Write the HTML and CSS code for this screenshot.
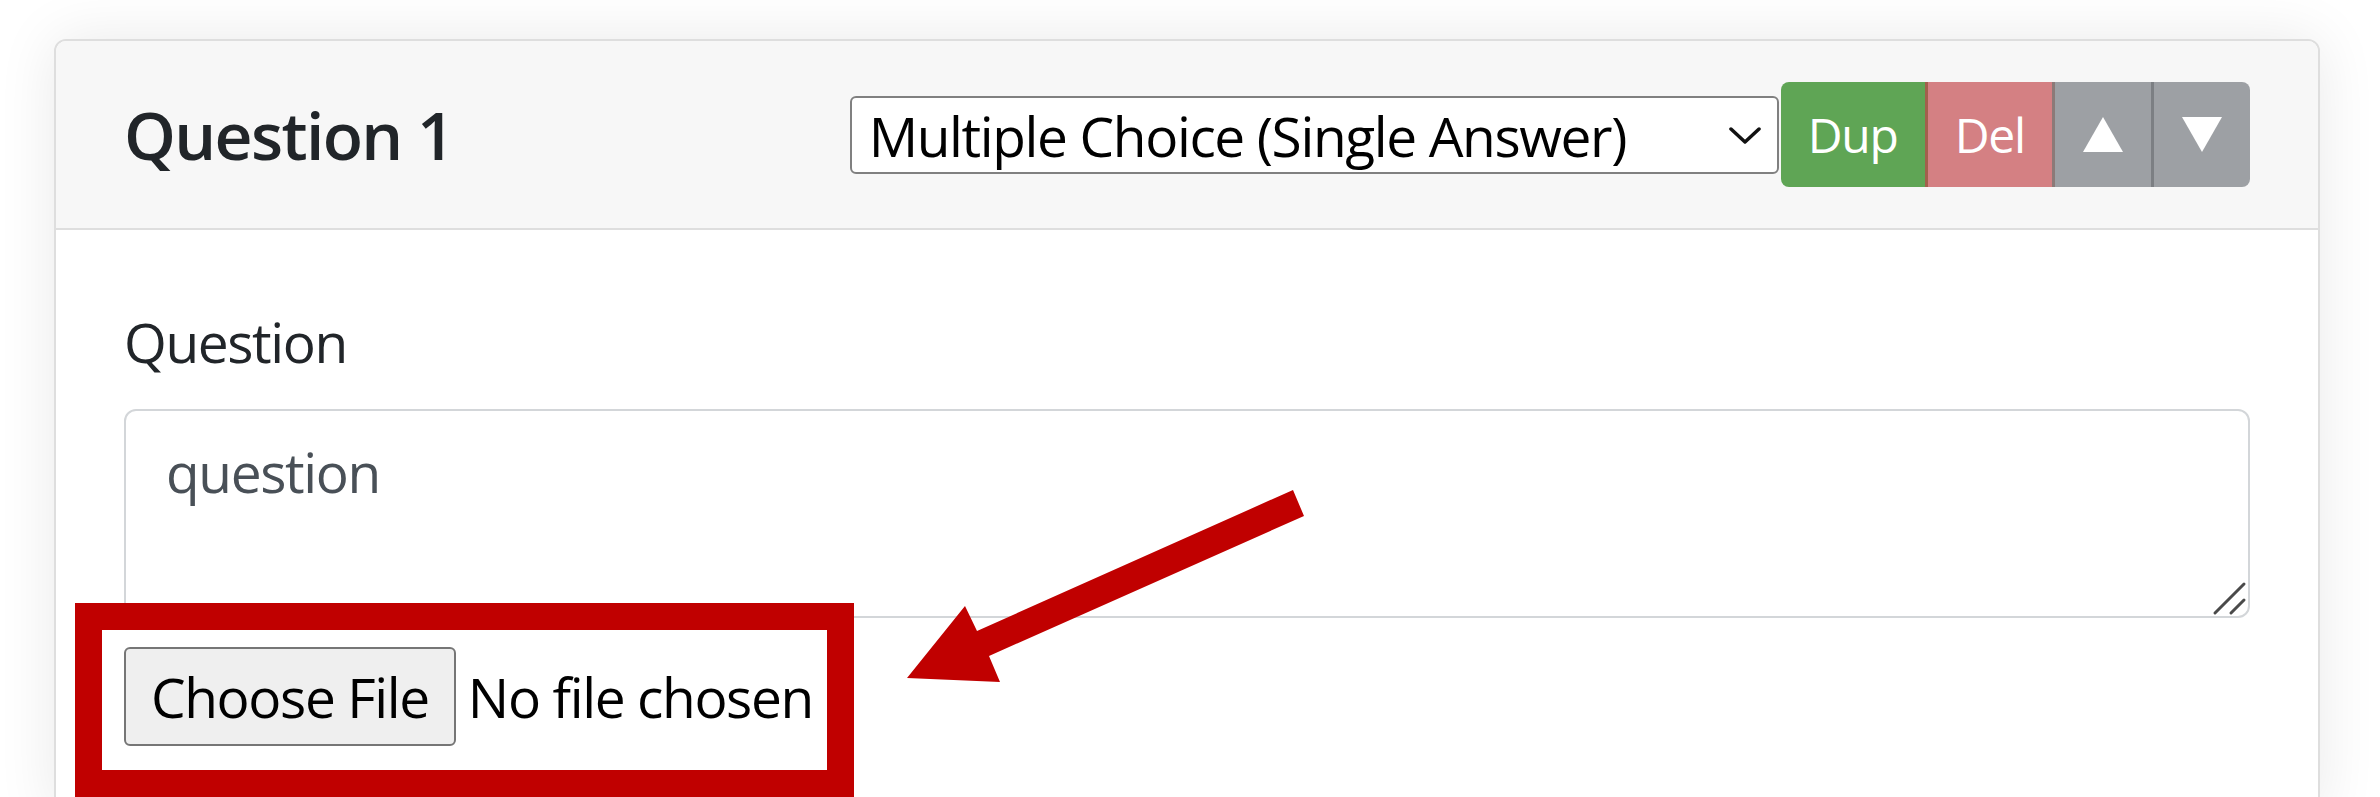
FILE: index.html
```html
<!DOCTYPE html>
<html lang="en">
<head>
<meta charset="utf-8">
<title>Question editor</title>
<link rel="stylesheet" href="styles.css">
</head>
<body>
<main class="page">
  <section class="card">
    <header class="card-header">
      <h5 class="card-title">Question 1</h5>
      <div class="type-select">
        <select class="select" aria-label="Question type">
          <option>Multiple Choice (Single Answer)</option>
        </select>
        <svg class="select-chevron" viewBox="0 0 32 17" aria-hidden="true">
          <polyline points="2,2 16,15 30,2" fill="none" stroke="#111" stroke-width="3.5" stroke-linecap="round" stroke-linejoin="round"/>
        </svg>
      </div>
      <div class="btn-group">
        <button class="btn btn-dup" type="button">Dup</button>
        <button class="btn btn-del" type="button">Del</button>
        <button class="btn btn-move btn-up" type="button" aria-label="Move up">
          <svg viewBox="0 0 40 35" aria-hidden="true"><polygon points="20,0 40,35 0,35" fill="#fff"/></svg>
        </button>
        <button class="btn btn-move btn-down" type="button" aria-label="Move down">
          <svg viewBox="0 0 40 35" aria-hidden="true"><polygon points="0,0 40,0 20,35" fill="#fff"/></svg>
        </button>
      </div>
    </header>
    <div class="card-body">
      <label class="field-label" for="q1">Question</label>
      <div class="textarea-wrap">
        <textarea id="q1" class="form-control">question</textarea>
        <svg class="grip" viewBox="0 0 40 40" aria-hidden="true">
          <line x1="5" y1="35" x2="34" y2="6" stroke="#4a4a4a" stroke-width="3" stroke-linecap="round"/>
          <line x1="21" y1="35" x2="34" y2="22" stroke="#4a4a4a" stroke-width="3" stroke-linecap="round"/>
        </svg>
      </div>
      <div class="file-row">
        <label class="file-btn" for="f1">Choose File</label>
        <input type="file" id="f1" class="file-input">
        <span class="file-name">No file chosen</span>
      </div>
    </div>
  </section>
  <div class="highlight-box"></div>
  <svg class="annotation-arrow" viewBox="0 0 410 210" aria-hidden="true">
    <polygon points="393,10 77,151 65,126 7,198 100,202 89,176 404,36" fill="#c00000"/>
  </svg>
</main>
</body>
</html>
```

FILE: styles.css
```css
* {
  box-sizing: border-box;
}

html,
body {
  margin: 0;
  background: #ffffff;
}

body {
  font-family: "Open Sans", "Noto Sans", sans-serif;
  color: #212529;
  overflow: hidden;
}

.page {
  position: relative;
  height: 797px;
  padding: 39px 60px 0 54px;
}

.card {
  background: #ffffff;
  border: 2px solid #dedede;
  border-radius: 12px;
  box-shadow: 0 0 60px rgba(0, 0, 0, 0.09);
  overflow: hidden;
}

.card-header {
  display: flex;
  align-items: center;
  padding: 41px 68px;
  background: #f7f7f7;
  border-bottom: 2px solid #dedede;
}

.card-title {
  margin: 0;
  font-size: 66px;
  font-weight: 600;
  line-height: 1.2;
  letter-spacing: -0.025em;
  color: #212529;
}

.type-select {
  position: relative;
  margin-left: auto;
  margin-right: 2px;
}

.select {
  appearance: none;
  -webkit-appearance: none;
  display: block;
  width: 929px;
  height: 78px;
  padding: 0 0 0 17px;
  border: 2px solid #808080;
  border-radius: 6px;
  background: #ffffff;
  font-family: "Open Sans", "Noto Sans", sans-serif;
  font-size: 55px;
  letter-spacing: -0.025em;
  color: #000000;
}

.select-chevron {
  position: absolute;
  right: 18px;
  top: 50%;
  width: 32px;
  height: 17px;
  margin-top: -8px;
  pointer-events: none;
}

.btn-group {
  display: flex;
  height: 105px;
  border-radius: 8px;
  overflow: hidden;
}

.btn {
  display: flex;
  align-items: center;
  justify-content: center;
  padding: 0 27px;
  border: 0;
  color: #ffffff;
  font-family: "Open Sans", "Noto Sans", sans-serif;
  font-size: 48px;
  letter-spacing: -0.025em;
}

.btn-dup {
  background: #5fa555;
}

.btn-del {
  background: #d48083;
  border-left: 3px solid #a2604c;
}

.btn-move {
  background: #9da0a4;
  padding: 0 28px;
}

.btn-up {
  border-left: 3px solid #8c7a78;
}

.btn-down {
  border-left: 3px solid #7c7f83;
}

.btn svg {
  display: block;
  width: 40px;
  height: 35px;
}

.card-body {
  padding: 70px 68px;
}

.field-label {
  display: block;
  margin-bottom: 25px;
  font-size: 55px;
  line-height: 84px;
  letter-spacing: -0.025em;
  color: #212529;
}

.textarea-wrap {
  position: relative;
  margin-bottom: 29px;
}

.form-control {
  display: block;
  width: 100%;
  height: 209px;
  padding: 19px 40px;
  border: 2px solid #d3d6d9;
  border-radius: 12px;
  background: #ffffff;
  font-family: "Open Sans", "Noto Sans", sans-serif;
  font-size: 55px;
  line-height: 84px;
  letter-spacing: -0.025em;
  color: #495057;
  resize: none;
}

.grip {
  position: absolute;
  right: 0;
  bottom: 0;
  width: 40px;
  height: 40px;
}

.file-row {
  display: flex;
  align-items: center;
  gap: 12px;
}

.file-btn {
  display: flex;
  align-items: center;
  height: 99px;
  padding: 0 25px;
  background: #efefef;
  border: 2px solid #767676;
  border-radius: 6px;
  font-size: 55px;
  letter-spacing: -0.025em;
  color: #000000;
}

.file-input {
  display: none;
}

.file-name {
  font-size: 55px;
  letter-spacing: -0.025em;
  color: #000000;
}

.highlight-box {
  position: absolute;
  left: 75px;
  top: 603px;
  width: 779px;
  height: 194px;
  border: 27px solid #c00000;
}

.annotation-arrow {
  position: absolute;
  left: 900px;
  top: 480px;
  width: 410px;
  height: 210px;
}
```
